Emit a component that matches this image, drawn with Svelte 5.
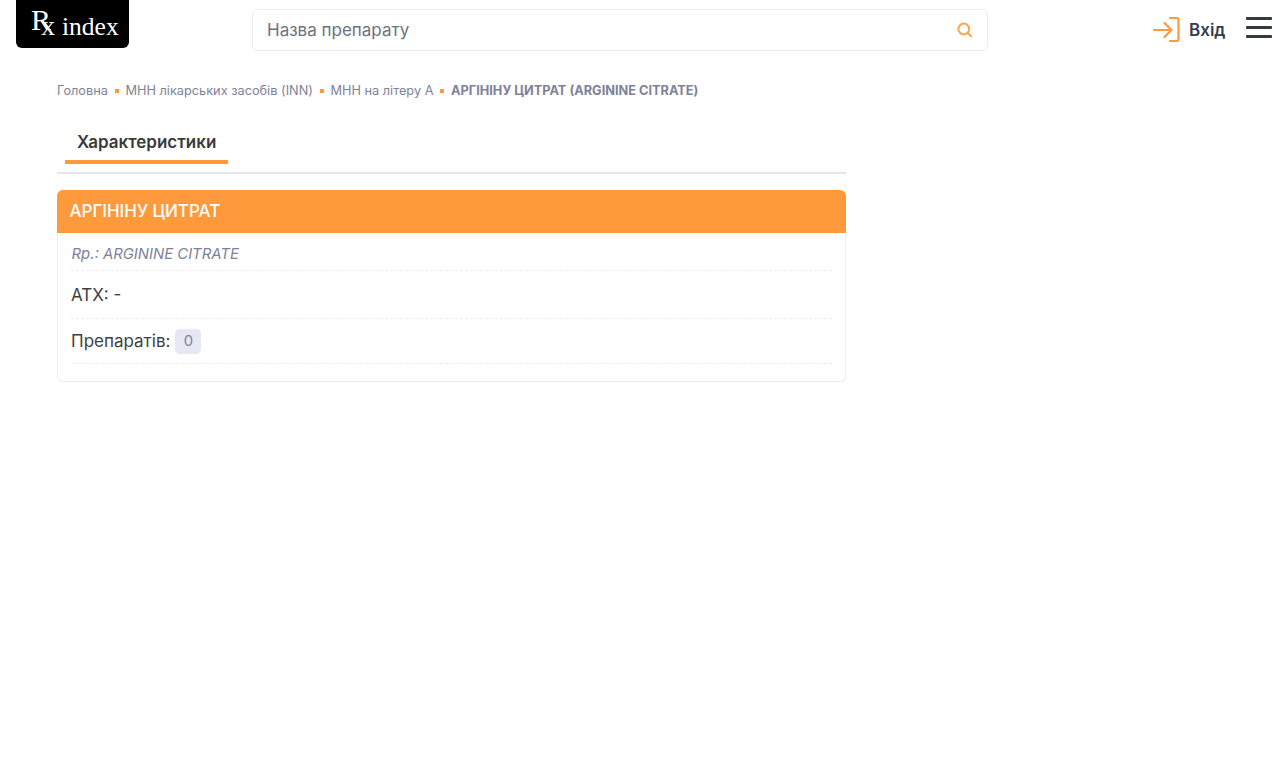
<script>
  const crumbs = ['Головна', 'МНН лікарських засобів (INN)', 'МНН на літеру А'];
</script>

<div class="page">
  <header class="top">
    <a class="logo" href="#top"><span class="r">R</span><span class="x">x</span><span class="idx">index</span></a>
    <div class="search">
      <span class="ph">Назва препарату</span>
      <svg width="18" height="18" viewBox="0 0 18 18" fill="none" stroke="#ffa552" stroke-width="2" stroke-linecap="round"><circle cx="7.800" cy="8" r="5.400"/><path d="M11.800 12 15 15.200"/></svg>
    </div>
    <div class="right">
      <svg class="login" width="27" height="27" viewBox="0 0 27 27" fill="none" stroke="#ff9a3c" stroke-width="2.200" stroke-linecap="round" stroke-linejoin="round"><path d="M17 2h6.500a2 2 0 0 1 2 2v19a2 2 0 0 1-2 2H17"/><path d="M1 14h17.500M11.500 7l7 7-7 7"/></svg>
      <span class="enter">Вхід</span>
      <div class="burger"><i></i><i></i><i></i></div>
    </div>
  </header>

  <nav class="crumbs">
    {#each crumbs as c}
      <span>{c}</span><b class="dot"></b>
    {/each}
    <strong>АРГІНІНУ ЦИТРАТ (ARGININE CITRATE)</strong>
  </nav>

  <main class="content">
    <div class="tabs"><div class="tab">Характеристики</div></div>
    <section class="card">
      <h1>АРГІНІНУ ЦИТРАТ</h1>
      <div class="body">
        <div class="row latin">Rp.: ARGININE CITRATE</div>
        <div class="row atc">АТХ: -</div>
        <div class="row count">Препаратів: <span class="badge">0</span></div>
      </div>
    </section>
  </main>
</div>

<style>
  :global(body) { margin: 0; background: #fff; font-family: Inter, "Liberation Sans", sans-serif; }
  .page { height: 768px; overflow: hidden; }
  .top { display: flex; align-items: flex-start; height: 70px; padding-left: 16px; box-sizing: border-box; }
  .logo { display: block; width: 113px; height: 48px; box-sizing: border-box; padding-left: 15px; background: #000; border-radius: 0 0 6px 6px; color: #fff; font-family: "Liberation Serif", serif; text-decoration: none; line-height: 48px; white-space: nowrap; }
  .r, .x, .idx { line-height: 0; }
  .r { font-size: 30px; vertical-align: -1px; }
  .x { font-size: 28px; margin-left: -10px; vertical-align: -6px; }
  .idx { font-size: 25.500px; margin-left: 7px; vertical-align: -6px; }
  .search { margin: 9px 0 0 123px; width: 736px; height: 42px; box-sizing: border-box; border: 1px solid #ebedf3; border-radius: 6px; display: flex; align-items: center; justify-content: space-between; padding: 0 13px 0 14px; }
  .ph { font-size: 17px; color: #6c7280; }
  .right { display: flex; align-items: center; margin: 16px 0 0 165px; }
  .login { display: block; }
  .enter { font-size: 17px; font-weight: 600; color: #343d4b; margin-left: 9px; }
  .burger { display: flex; flex-direction: column; gap: 6.500px; margin-left: 21px; align-self: flex-start; margin-top: 1px; }
  .burger i { display: block; width: 26px; height: 2.500px; background: #343a40; border-radius: 1px; }
  .crumbs { display: flex; align-items: center; margin: 0 0 0 57px; height: 40px; font-size: 12.750px; color: #7e8299; }
  .dot { width: 4px; height: 4px; background: #ff9a3c; margin: 1px 6.750px 0 6.750px; }
  .crumbs strong { font-weight: 700; }
  .content { width: 789px; margin-left: 57px; }
  .tabs { border-bottom: 2px solid #e4e6ef; padding: 12px 0 0 8px; height: 50px; margin-bottom: 16px; }
  .tab { display: inline-block; box-sizing: border-box; height: 42px; padding: 10px 12px 0; font-size: 17px; font-weight: 600; color: #3a3a3a; border-bottom: 4px solid #ff9a3c; }
  .card { border: 1px solid #ebedf3; border-top: 0; border-radius: 6px; height: 192px; box-sizing: border-box; }
  h1 { margin: 0 -1px; height: 43px; background: #ff9a3c; border-radius: 6px 6px 0 0; color: #fff; font-size: 17px; font-weight: 500; line-height: 43px; padding-left: 12.500px; }
  .body { padding: 0 13px; }
  .row { border-bottom: 1px dashed #ebedf3; box-sizing: border-box; color: #3f3f3f; font-size: 17px; display: flex; align-items: center; }
  .latin { height: 38px; font-size: 14.875px; font-style: italic; color: #7e8299; padding: 4px 0 0 0.500px; }
  .atc { height: 48px; }
  .count { height: 45px; }
  .badge { display: inline-block; width: 26px; height: 25px; line-height: 25px; text-align: center; background: #e6e7f2; border-radius: 5px; color: #7e8299; font-size: 14.875px; margin-left: 5px; }
</style>
